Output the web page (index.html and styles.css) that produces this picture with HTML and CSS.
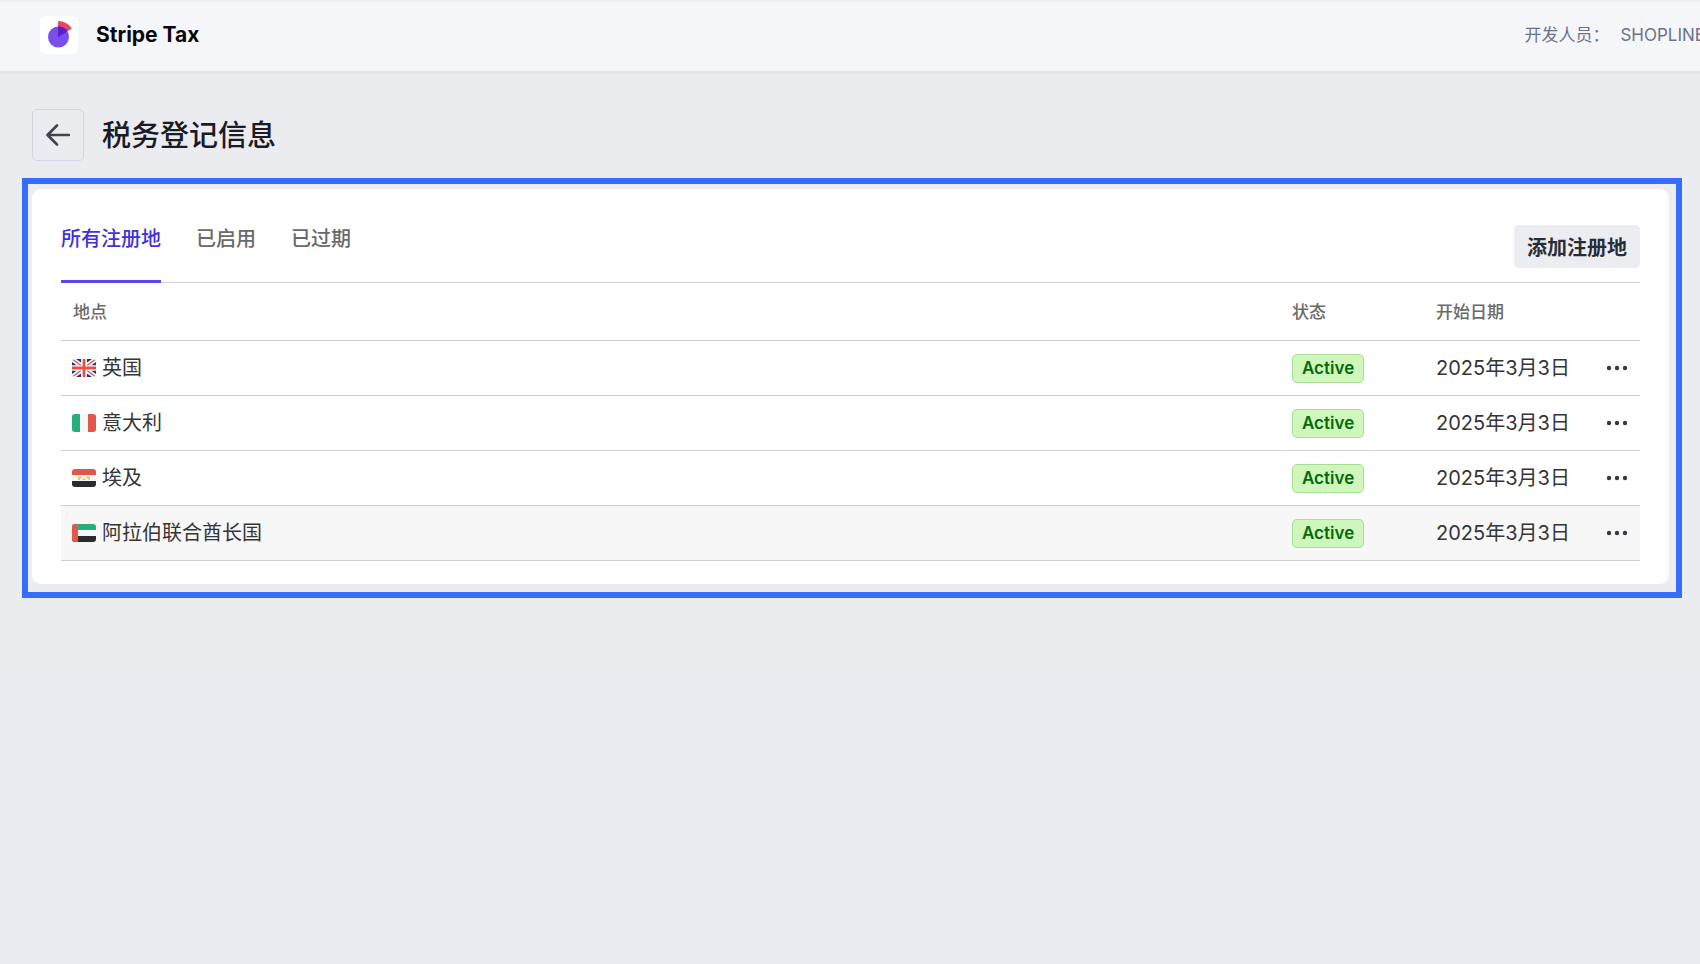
FILE: index.html
```
<!DOCTYPE html>
<html lang="zh-CN">
<head>
  <meta charset="UTF-8">
  <meta name="viewport" content="width=device-width, initial-scale=1">
  <title>税务登记信息</title>
  <link rel="stylesheet" href="styles.css">
</head>
<body>
  <header class="topbar">
    <div class="brand">
      <span class="brand-logo">
        <svg width="38" height="38" viewBox="0 0 38 38" aria-hidden="true">
          <path d="M18 5a17 17 0 0 1 14 7.500L18 21z" fill="#e8475f"/>
          <circle cx="18.500" cy="21" r="10.500" fill="#7a4eea"/>
          <path d="M18 10.500a10.500 10.500 0 0 1 9.500 5L18 21z" fill="#5a1fd0"/>
        </svg>
      </span>
      <span class="brand-name">Stripe Tax</span>
    </div>
    <div class="developer">
      <span>开发人员：</span>
      <span>SHOPLINE</span>
    </div>
  </header>

  <main>
    <div class="page-head">
      <button class="back" type="button" aria-label="返回">
        <svg width="24" height="24" viewBox="0 0 24 24" fill="none" stroke="#414552" stroke-width="2.600" stroke-linecap="round" stroke-linejoin="round" aria-hidden="true">
          <path d="M11 2.500L1.500 12l9.500 9.500M2 12h21"/>
        </svg>
      </button>
      <h1>税务登记信息</h1>
    </div>

    <div class="frame">
      <section class="card">
        <div class="toolbar">
          <nav class="tabs">
            <a class="tab active" href="#all">所有注册地</a>
            <a class="tab" href="#active">已启用</a>
            <a class="tab" href="#expired">已过期</a>
          </nav>
          <button class="add" type="button">添加注册地</button>
        </div>

        <table>
          <thead>
            <tr>
              <th>地点</th>
              <th class="col-status">状态</th>
              <th class="col-date">开始日期</th>
              <th class="col-more"></th>
            </tr>
          </thead>
          <tbody>
            <tr>
              <td>
                <div class="place">
                  <svg class="flag" viewBox="0 0 24 18" aria-hidden="true">
                    <rect width="24" height="18" fill="#fff"/>
                    <path d="M4 0h5v3.500zM20 0h-5v3.500zM4 18h5v-3.500zM20 18h-5v-3.500zM0 3l5 3.500H0zM24 3l-5 3.500h5zM0 15l5-3.500H0zM24 15l-5-3.500h5z" fill="#1d2f8a"/>
                    <path d="M0 0l9 6.500M24 0l-9 6.500M0 18l9-6.500M24 18l-9-6.500" stroke="#e4514a" stroke-width="1.300"/>
                    <path d="M12 0v18M0 9h24" stroke="#fff" stroke-width="5"/>
                    <path d="M12 0v18M0 9h24" stroke="#e4514a" stroke-width="2.800"/>
                  </svg>
                  英国
                </div>
              </td>
              <td><span class="badge">Active</span></td>
              <td>2025年3月3日</td>
              <td class="more-cell">
                <button class="more" type="button" aria-label="更多操作">
                  <svg width="22" height="6" viewBox="0 0 22 6" fill="#353a44" aria-hidden="true"><circle cx="3" cy="3" r="2.200"/><circle cx="11" cy="3" r="2.200"/><circle cx="19" cy="3" r="2.200"/></svg>
                </button>
              </td>
            </tr>
            <tr>
              <td>
                <div class="place">
                  <svg class="flag" viewBox="0 0 24 18" aria-hidden="true">
                    <rect width="24" height="18" fill="#f5f6fa"/>
                    <rect width="8" height="18" fill="#28ae7b"/>
                    <rect x="16" width="8" height="18" fill="#e2574c"/>
                  </svg>
                  意大利
                </div>
              </td>
              <td><span class="badge">Active</span></td>
              <td>2025年3月3日</td>
              <td class="more-cell">
                <button class="more" type="button" aria-label="更多操作">
                  <svg width="22" height="6" viewBox="0 0 22 6" fill="#353a44" aria-hidden="true"><circle cx="3" cy="3" r="2.200"/><circle cx="11" cy="3" r="2.200"/><circle cx="19" cy="3" r="2.200"/></svg>
                </button>
              </td>
            </tr>
            <tr>
              <td>
                <div class="place">
                  <svg class="flag" viewBox="0 0 24 18" aria-hidden="true">
                    <rect width="24" height="18" fill="#f5f6fa"/>
                    <rect width="24" height="6" fill="#e2574c"/>
                    <rect y="12" width="24" height="6" fill="#2c2c2e"/>
                    <path d="M6 7.500h3.500v2H8V11H6zM10.500 9.500h3V11h-3zM14.500 7.500H18V11h-1.500V9.500h-2z" fill="#f7c64a"/>
                  </svg>
                  埃及
                </div>
              </td>
              <td><span class="badge">Active</span></td>
              <td>2025年3月3日</td>
              <td class="more-cell">
                <button class="more" type="button" aria-label="更多操作">
                  <svg width="22" height="6" viewBox="0 0 22 6" fill="#353a44" aria-hidden="true"><circle cx="3" cy="3" r="2.200"/><circle cx="11" cy="3" r="2.200"/><circle cx="19" cy="3" r="2.200"/></svg>
                </button>
              </td>
            </tr>
            <tr class="hovered">
              <td>
                <div class="place">
                  <svg class="flag" viewBox="0 0 24 18" aria-hidden="true">
                    <rect width="24" height="18" fill="#f5f6fa"/>
                    <rect width="24" height="6" fill="#28ae7b"/>
                    <rect y="12" width="24" height="6" fill="#2c2c2e"/>
                    <rect width="6" height="18" fill="#e2574c"/>
                  </svg>
                  阿拉伯联合酋长国
                </div>
              </td>
              <td><span class="badge">Active</span></td>
              <td>2025年3月3日</td>
              <td class="more-cell">
                <button class="more" type="button" aria-label="更多操作">
                  <svg width="22" height="6" viewBox="0 0 22 6" fill="#353a44" aria-hidden="true"><circle cx="3" cy="3" r="2.200"/><circle cx="11" cy="3" r="2.200"/><circle cx="19" cy="3" r="2.200"/></svg>
                </button>
              </td>
            </tr>
          </tbody>
        </table>
      </section>
    </div>
  </main>
</body>
</html>
```
FILE: styles.css
```
* {
  box-sizing: border-box;
}
body {
  margin: 0;
  font-family: Inter, 'Noto Sans CJK SC', sans-serif;
  font-size: 20px;
  line-height: 28px;
  color: #353535;
  background: #e8ebf0;
  overflow-x: hidden;
}
button {
  font-family: inherit;
  cursor: pointer;
}

/* top bar */
.topbar {
  display: flex;
  align-items: center;
  justify-content: space-between;
  height: 74px;
  padding: 0 0 4px 40px;
  background: #f5f6fa;
  border-top: 2px solid #eff0f4;
  border-bottom: 3px solid #e3e4e9;
  overflow: hidden;
}
.brand {
  display: flex;
  align-items: center;
  gap: 18px;
}
.brand-logo {
  width: 38px;
  height: 38px;
  background: white;
  border-radius: 6px;
}
.brand-logo svg {
  display: block;
}
.brand-name {
  font-size: 21px;
  font-weight: 700;
  color: #0a0a0c;
}
.developer {
  display: flex;
  gap: 11px;
  margin-right: -5px;
  font-size: 17px;
  color: #6c7289;
  white-space: nowrap;
}

/* page */
main {
  padding: 35px 18px 72px 22px;
  background: #ebecf0;
}
.page-head {
  display: flex;
  align-items: center;
  gap: 18px;
  padding: 0 10px;
  margin-bottom: 17px;
}
.back {
  display: flex;
  align-items: center;
  justify-content: center;
  width: 52px;
  height: 52px;
  padding: 0;
  background: transparent;
  border: 1px solid #cfd5e6;
  border-radius: 5px;
}
h1 {
  margin: 0;
  padding-top: 2px;
  font-size: 29px;
  line-height: 40px;
  font-weight: 500;
  color: #1a1b25;
}
.frame {
  padding: 5px 7px 8px 4px;
  border: 6px solid #356dff;
}
.card {
  padding: 28px 29px 23px;
  background: white;
  border-radius: 9px;
}

/* tabs */
.toolbar {
  display: flex;
  justify-content: space-between;
  align-items: stretch;
  height: 66px;
  border-bottom: 1px solid #d0d0d0;
}
.tabs {
  display: flex;
  gap: 35px;
}
.tab {
  padding-top: 8px;
  height: 66px;
  font-weight: 500;
  color: #6a6a6a;
  text-decoration: none;
}
.tab.active {
  color: #4430d8;
  border-bottom: 3px solid #5a45ee;
}
.add {
  align-self: flex-start;
  height: 43px;
  padding: 0 13px;
  margin-top: 8px;
  font-size: 20px;
  font-weight: 600;
  color: #2a2c35;
  background: #ebedf1;
  border: none;
  border-radius: 5px;
}

/* table */
table {
  width: 100%;
  border-collapse: separate;
  border-spacing: 0;
  table-layout: fixed;
}
th, td {
  height: 55px;
  padding: 0 12px;
  text-align: left;
  border-bottom: 1px solid #d0d0d0;
}
td:first-child {
  padding-left: 11px;
}
th {
  height: 58px;
  font-size: 17px;
  font-weight: 500;
  color: #6a6a6a;
}
.col-status {
  width: 144px;
}
.col-date {
  width: 170px;
}
.col-more {
  width: 46px;
}
.hovered td {
  background: #f7f7f7;
}
.place {
  display: flex;
  align-items: center;
  gap: 6px;
}
.flag {
  width: 24px;
  height: 18px;
  border-radius: 3px;
}
.badge {
  display: inline-block;
  padding: 0 9px;
  font-size: 17px;
  line-height: 27px;
  font-weight: 600;
  color: #05690d;
  background: #cff6bb;
  border: 1px solid #a8df94;
  border-radius: 5px;
  vertical-align: middle;
}
.more-cell {
  padding: 0;
}
.more {
  display: flex;
  align-items: center;
  justify-content: center;
  width: 100%;
  height: 28px;
  padding: 0;
  background: none;
  border: none;
}
```
